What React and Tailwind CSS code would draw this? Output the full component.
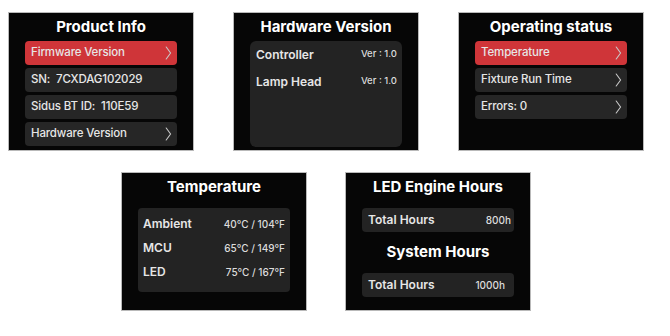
export default function App() {
  const Chevron = () => (
    <svg width="7" height="14" viewBox="0 0 7 14" className="shrink-0">
      <path d="M1.2 1 L5.6 7 L1.2 13" fill="none" stroke="#c9c9c9" strokeWidth="1.1" strokeLinecap="round" strokeLinejoin="round" />
    </svg>
  );

  const MenuRow = ({ label, active, arrow }) => (
    <div
      className={`h-[24px] rounded-[4px] flex items-center justify-between pl-[6px] pr-[5px] ${
        active ? 'bg-[#cf3539]' : 'bg-[#262626]'
      }`}
    >
      <span className="text-[11.5px] tracking-[-0.15px] font-medium text-[#e6e6e6] whitespace-pre">{label}</span>
      {arrow && <Chevron />}
    </div>
  );

  const Panel = ({ children }) => (
    <div className="w-[186px] h-[139px] bg-[#060606] border border-[#b9b9b9] flex flex-col">
      {children}
    </div>
  );

  const Title = ({ children, h = 'h-[28px]' }) => (
    <div className={`${h} flex items-center justify-center text-[15px] font-bold text-white`}>
      {children}
    </div>
  );

  return (
    <div className="w-[670px] h-[336px] bg-white font-['Inter','Noto_Sans',sans-serif]">
      <div className="flex gap-[39px] pl-[8px] pt-[12px]">
        <Panel>
          <Title>Product Info</Title>
          <div className="flex flex-col gap-[3px] px-[16px]">
            <MenuRow label="Firmware Version" active arrow />
            <MenuRow label="SN:  7CXDAG102029" />
            <MenuRow label="Sidus BT ID:  110E59" />
            <MenuRow label="Hardware Version" arrow />
          </div>
        </Panel>

        <Panel>
          <Title>Hardware Version</Title>
          <div className="mx-[16px] h-[106px] rounded-[6px] bg-[#232323] pl-[6px] pr-[5px]">
            {[
              ['Controller', 'Ver : 1.0'],
              ['Lamp Head', 'Ver : 1.0'],
            ].map(([k, v]) => (
              <div key={k} className="h-[27px] flex items-center justify-between">
                <span className="text-[12px] font-semibold text-[#e6e6e6]">{k}</span>
                <span className="text-[9.5px] font-medium text-[#dcdcdc]">{v}</span>
              </div>
            ))}
          </div>
        </Panel>

        <Panel>
          <Title>Operating status</Title>
          <div className="flex flex-col gap-[3px] px-[16px]">
            <MenuRow label="Temperature" active arrow />
            <MenuRow label="Fixture Run Time" arrow />
            <MenuRow label="Errors: 0" arrow />
          </div>
        </Panel>
      </div>

      <div className="flex gap-[38px] pl-[121px] pt-[21px]">
        <Panel>
          <Title>Temperature</Title>
          <div className="mt-[7px] mx-[16px] h-[84px] rounded-[4px] bg-[#232323] pt-[4px] pl-[5px] pr-[5px]">
            {[
              ['Ambient', '40°C / 104°F'],
              ['MCU', '65°C / 149°F'],
              ['LED', '75°C / 167°F'],
            ].map(([k, v]) => (
              <div key={k} className="h-[24px] flex items-center justify-between">
                <span className="text-[12px] font-semibold text-[#e6e6e6]">{k}</span>
                <span className="text-[10px] font-medium text-[#dcdcdc]">{v}</span>
              </div>
            ))}
          </div>
        </Panel>

        <Panel>
          <Title>LED Engine Hours</Title>
          <div className="mt-[7px] mx-[16px] h-[24px] rounded-[4px] bg-[#232323] flex items-center justify-between pl-[6px] pr-[3px]">
            <span className="text-[12px] font-semibold text-[#e6e6e6]">Total Hours</span>
            <span className="text-[10px] font-medium text-[#dcdcdc]">800h</span>
          </div>
          <Title h="h-[41px]">System Hours</Title>
          <div className="mx-[16px] h-[24px] rounded-[4px] bg-[#232323] flex items-center justify-between pl-[6px] pr-[9px]">
            <span className="text-[12px] font-semibold text-[#e6e6e6]">Total Hours</span>
            <span className="text-[10px] font-medium text-[#dcdcdc]">1000h</span>
          </div>
        </Panel>
      </div>
    </div>
  );
}
